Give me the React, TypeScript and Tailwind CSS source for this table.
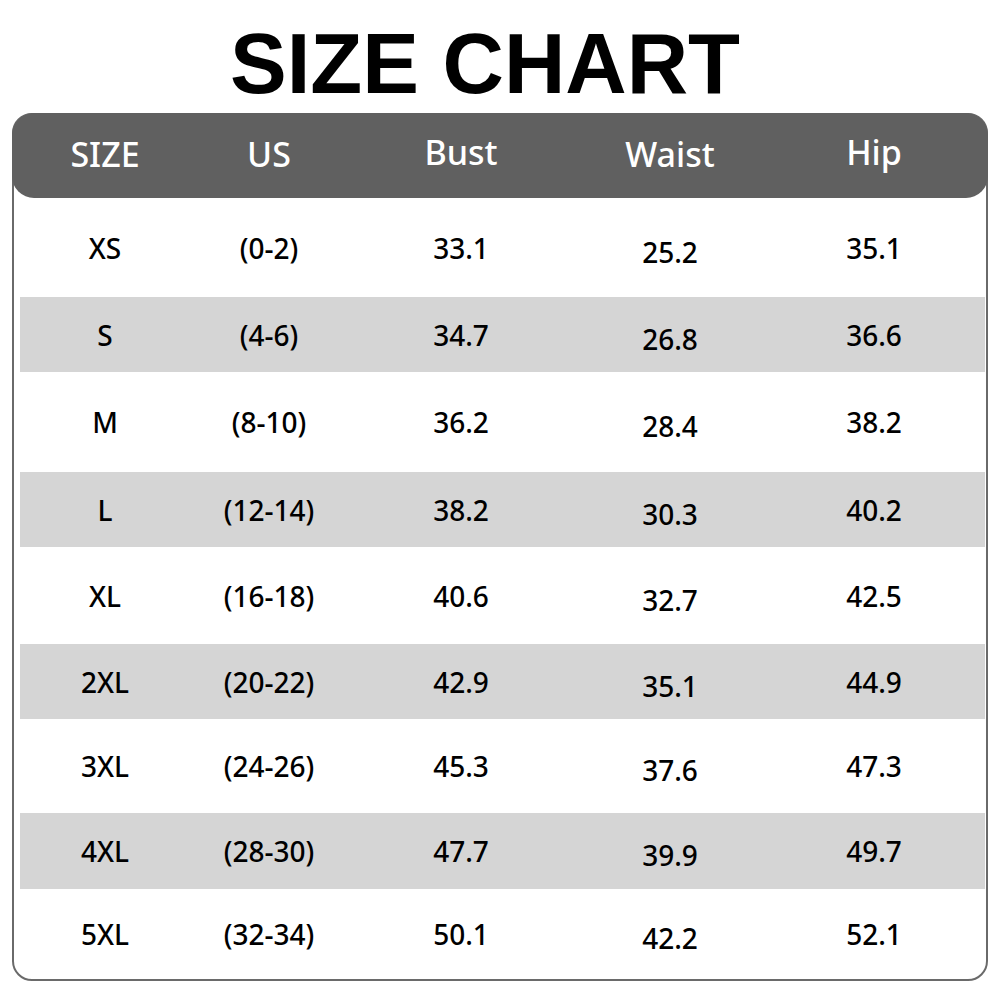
const rows = [
  { size: 'XS', us: '(0-2)', bust: '33.1', waist: '25.2', hip: '35.1', h: 'h-[99px]', shaded: false },
  { size: 'S', us: '(4-6)', bust: '34.7', waist: '26.8', hip: '36.6', h: 'h-[75px]', shaded: true },
  { size: 'M', us: '(8-10)', bust: '36.2', waist: '28.4', hip: '38.2', h: 'h-[100px]', shaded: false },
  { size: 'L', us: '(12-14)', bust: '38.2', waist: '30.3', hip: '40.2', h: 'h-[75px]', shaded: true },
  { size: 'XL', us: '(16-18)', bust: '40.6', waist: '32.7', hip: '42.5', h: 'h-[97px]', shaded: false },
  { size: '2XL', us: '(20-22)', bust: '42.9', waist: '35.1', hip: '44.9', h: 'h-[75px]', shaded: true },
  { size: '3XL', us: '(24-26)', bust: '45.3', waist: '37.6', hip: '47.3', h: 'h-[94px]', shaded: false },
  { size: '4XL', us: '(28-30)', bust: '47.7', waist: '39.9', hip: '49.7', h: 'h-[76px]', shaded: true },
  { size: '5XL', us: '(32-34)', bust: '50.1', waist: '42.2', hip: '52.1', h: 'h-[90px]', shaded: false },
];

const cols = 'grid grid-cols-[170px_158px_226px_192px_216px] items-center text-center';

export default function App() {
  return (
    <div className="w-[1000px] h-[1000px] bg-white font-['Noto_Sans','Open_Sans',sans-serif] text-black">
      <h1 className="pt-[21px] pr-[30px] text-center text-[85px] leading-none font-bold font-['Liberation_Sans',Arial,sans-serif]">
        SIZE CHART
      </h1>

      <div className="mt-[7px] mx-[12px] h-[868px] rounded-[20px] border-2 border-[#6a6a6a]">
        {/* header bar, rounded on all corners, sits over the frame */}
        <div className="-mx-[2px] -mt-[2px] h-[85px] rounded-[22px] bg-[#606060] text-white text-[34px] font-medium pl-[8px] pr-[5px]">
          <div className={`${cols} h-full`}>
            <span className="pb-[2px]">SIZE</span>
            <span className="pb-[2px]">US</span>
            <span className="pb-[6px]">Bust</span>
            <span className="pb-[2px]">Waist</span>
            <span className="pb-[6px]">Hip</span>
          </div>
        </div>

        {rows.map((r) => (
          <div key={r.size} className={`${r.h} flex items-stretch pl-[6px] pr-[1px]`}>
            <div className={`${cols} w-full text-[28px] font-medium ${r.shaded ? 'bg-[#d5d5d5]' : ''}`}>
              <span>{r.size}</span>
              <span>{r.us}</span>
              <span>{r.bust}</span>
              <span className="pt-[8px]">{r.waist}</span>
              <span>{r.hip}</span>
            </div>
          </div>
        ))}
      </div>
    </div>
  );
}
